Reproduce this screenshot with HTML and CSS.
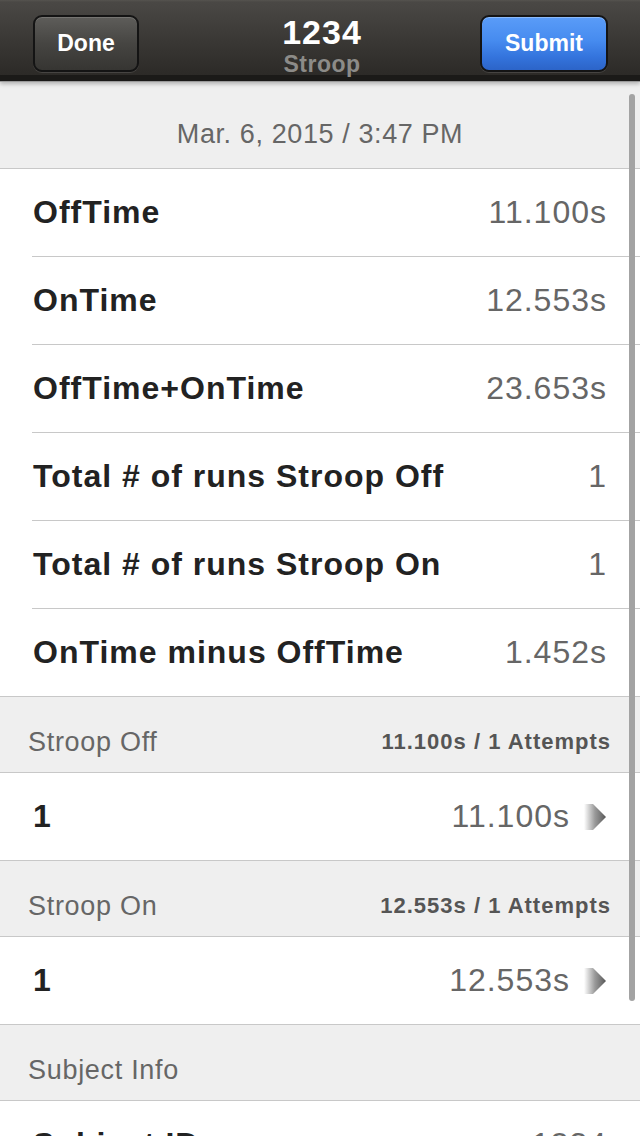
FILE: index.html
```html
<!DOCTYPE html>
<html>
<head>
<meta charset="utf-8">
<link rel="stylesheet" href="styles.css">
</head>
<body>
<div class="screen">
  <header class="navbar">
    <button class="btn btn-dark">Done</button>
    <div class="title">
      <div class="title-main">1234</div>
      <div class="title-sub">Stroop</div>
    </div>
    <button class="btn btn-blue">Submit</button>
  </header>
  <main class="content">
    <div class="date-head">Mar. 6, 2015 / 3:47 PM</div>
    <section class="group">
      <div class="row"><span class="label">OffTime</span><span class="value">11.100s</span></div>
      <div class="row"><span class="label">OnTime</span><span class="value">12.553s</span></div>
      <div class="row"><span class="label">OffTime+OnTime</span><span class="value">23.653s</span></div>
      <div class="row"><span class="label">Total # of runs Stroop Off</span><span class="value">1</span></div>
      <div class="row"><span class="label">Total # of runs Stroop On</span><span class="value">1</span></div>
      <div class="row"><span class="label">OnTime minus OffTime</span><span class="value">1.452s</span></div>
    </section>
    <div class="sec-head"><span class="sec-title">Stroop Off</span><span class="sec-info">11.100s / 1 Attempts</span></div>
    <section class="group">
      <div class="row row-link"><span class="label">1</span><span class="value">11.100s</span>
        <svg class="chev" width="24" height="26" viewBox="0 0 24 26"><defs><linearGradient id="cg1" x1="0" y1="0" x2="1" y2="0"><stop offset="0" stop-color="#777" stop-opacity="0"/><stop offset="0.5" stop-color="#777" stop-opacity="0.75"/><stop offset="1" stop-color="#555"/></linearGradient></defs><polygon points="0,0 9,0 22,13 9,26 0,26" fill="url(#cg1)"/></svg>
      </div>
    </section>
    <div class="sec-head"><span class="sec-title">Stroop On</span><span class="sec-info">12.553s / 1 Attempts</span></div>
    <section class="group">
      <div class="row row-link"><span class="label">1</span><span class="value">12.553s</span>
        <svg class="chev" width="24" height="26" viewBox="0 0 24 26"><defs><linearGradient id="cg2" x1="0" y1="0" x2="1" y2="0"><stop offset="0" stop-color="#777" stop-opacity="0"/><stop offset="0.5" stop-color="#777" stop-opacity="0.75"/><stop offset="1" stop-color="#555"/></linearGradient></defs><polygon points="0,0 9,0 22,13 9,26 0,26" fill="url(#cg2)"/></svg>
      </div>
    </section>
    <div class="sec-head"><span class="sec-title">Subject Info</span></div>
    <section class="group">
      <div class="row"><span class="label">Subject ID</span><span class="value">1234</span></div>
    </section>
  </main>
  <div class="scrollbar"></div>
</div>
</body>
</html>
```

FILE: styles.css
```css
html, body {
  margin: 0;
  padding: 0;
}
body {
  width: 640px;
  height: 1136px;
  overflow: hidden;
  background: #efefef;
  font-family: "Liberation Sans", Arial, sans-serif;
}
.screen {
  position: relative;
  width: 640px;
  height: 1136px;
  overflow: hidden;
  display: flex;
  flex-direction: column;
}
.navbar {
  position: relative;
  z-index: 2;
  height: 75px;
  flex: none;
  display: grid;
  grid-template-columns: 1fr auto 1fr;
  align-items: start;
  padding: 0 32px 0 33px;
  background: linear-gradient(#55534f 0px, #4a4845 2px, #3a3835 40px, #2c2a27 75px);
  border-bottom: 6px solid #1b1a18;
  box-shadow: 0 1px 0 #9a9a9a, 0 3px 4px rgba(0,0,0,0.25);
}
.btn {
  margin-top: 15px;
  height: 57px;
  border: 2px solid #141414;
  border-radius: 9px;
  color: #fff;
  font-family: "Liberation Sans", Arial, sans-serif;
  font-weight: bold;
  font-size: 23px;
  padding: 0;
}
.btn-dark {
  justify-self: start;
  width: 106px;
  background: linear-gradient(#5e5d5a, #464542 50%, #363532);
  box-shadow: inset 0 1px 0 rgba(255,255,255,0.15), 0 1px 0 rgba(255,255,255,0.12);
}
.btn-blue {
  justify-self: end;
  width: 128px;
  background: linear-gradient(#5a9cf8, #468bef 45%, #3474dd 75%, #2c64c8);
  box-shadow: inset 0 1px 0 rgba(255,255,255,0.3), 0 1px 0 rgba(255,255,255,0.12);
}
.title {
  display: flex;
  flex-direction: column;
  align-items: center;
  padding-top: 14px;
  padding-left: 3px;
}
.title-main {
  color: #fff;
  font-weight: bold;
  font-size: 34px;
  line-height: 36px;
  letter-spacing: 1px;
}
.title-sub {
  color: #8c8b88;
  font-weight: bold;
  font-size: 23px;
  line-height: 26px;
  letter-spacing: 0.5px;
  margin-top: 1px;
}
.content {
  flex: 1;
  display: flex;
  flex-direction: column;
  background: #efefef;
}
.date-head {
  height: 88px;
  flex: none;
  box-sizing: border-box;
  display: flex;
  align-items: flex-end;
  justify-content: center;
  padding-bottom: 18px;
  font-size: 27px;
  line-height: 32px;
  color: #666;
  letter-spacing: 0.6px;
  border-bottom: 1px solid #c8c8c8;
}
.group {
  flex: none;
  background: #fff;
  padding-left: 32px;
  border-bottom: 1px solid #c8c8c8;
}
.row {
  height: 87px;
  display: flex;
  align-items: center;
  padding-right: 33px;
  border-bottom: 1px solid #c8c8c8;
}
.row:last-child {
  border-bottom: none;
}
.label {
  flex: 1;
  padding-left: 1px;
  font-weight: bold;
  font-size: 32px;
  letter-spacing: 1px;
  color: #222;
}
.value {
  font-size: 32px;
  letter-spacing: 1px;
  color: #666;
}
.row-link .value {
  margin-right: 14px;
}
.chev {
  display: block;
  margin-right: -1px;
}
.sec-head {
  height: 76px;
  flex: none;
  box-sizing: border-box;
  display: flex;
  align-items: flex-end;
  justify-content: space-between;
  padding: 0 29px 14px 28px;
  border-bottom: 1px solid #c8c8c8;
}
.sec-title {
  font-size: 27px;
  line-height: 32px;
  letter-spacing: 0.7px;
  color: #666;
}
.sec-info {
  font-size: 22px;
  line-height: 32px;
  font-weight: bold;
  letter-spacing: 1px;
  color: #555;
}
.scrollbar {
  position: absolute;
  left: 629px;
  top: 94px;
  width: 6px;
  height: 907px;
  border-radius: 3px;
  background: #a3a3a3;
}
```
